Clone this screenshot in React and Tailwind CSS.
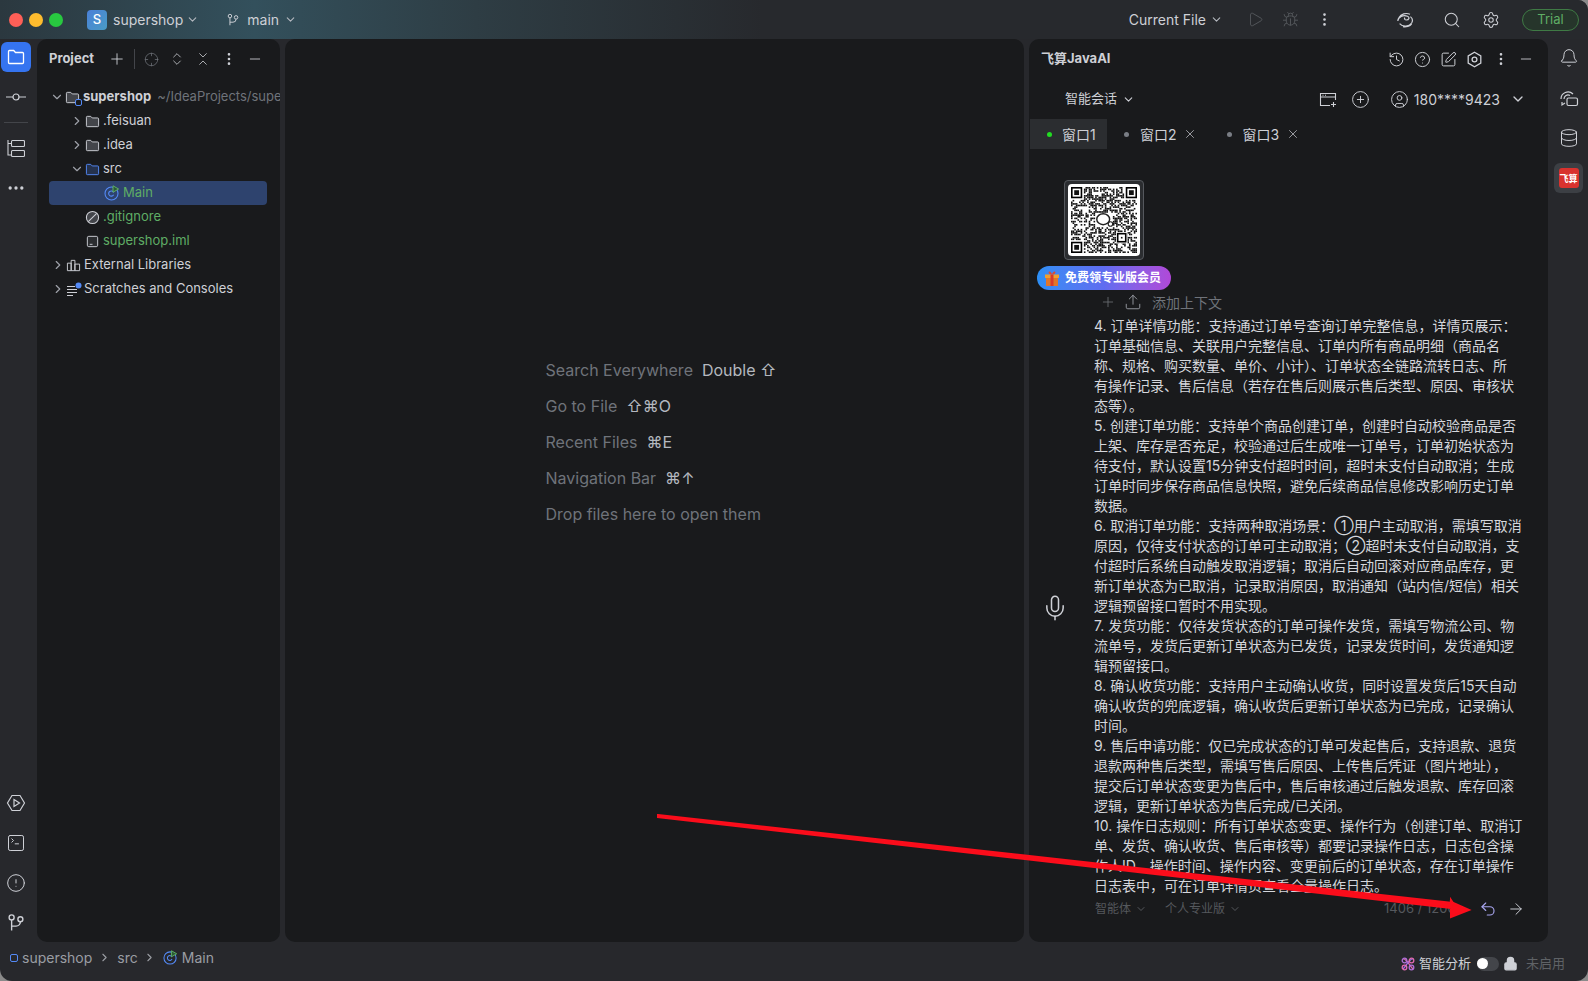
import React from 'react';
import {
  ArrowRight, Bell, Bug, ChevronDown, ChevronRight, ChevronsDownUp, ChevronsUpDown, CircleAlert,
  CircleHelp, CirclePlus, CircleUser, Crosshair, Database, Ellipsis, EllipsisVertical, History,
  Lock, Mic, Minus, Play, Plus, Search, Settings, SquarePen, SquareTerminal, Undo2, Upload, X,
} from 'lucide-react';

const Folder = ({ blue }) => (
  <svg width="15" height="15" viewBox="0 0 16 16" fill={blue ? '#25324d' : '#43454a'} stroke={blue ? '#548af7' : '#ced0d6'} strokeWidth="1">
    <path d="M1.5 3.5a1 1 0 0 1 1-1h3.6l1.6 1.7h5.8a1 1 0 0 1 1 1v7.3a1 1 0 0 1-1 1h-11a1 1 0 0 1-1-1z" />
  </svg>
);

const MainIcon = ({ size = 16 }) => (
  <svg width={size} height={size} viewBox="0 0 16 16" fill="none">
    <circle cx="7.5" cy="8.5" r="6.5" stroke="#548af7" strokeWidth="1.1" />
    <path d="M9.6 7.4a2.6 2.6 0 1 0 0 2.3" stroke="#548af7" strokeWidth="1.1" />
    <path d="M9 .8l5.6 3.2L9 7.2z" fill="#2c5a36" stroke="#5fad65" strokeWidth="1" />
  </svg>
);

const BranchIcon = ({ size = 16, color = '#ced0d6' }) => (
  <svg width={size} height={size} viewBox="0 0 16 16" fill="none" stroke={color} strokeWidth="1.1">
    <circle cx="4.5" cy="3.5" r="2" />
    <circle cx="11.5" cy="5" r="2" />
    <path d="M4.5 5.5V14M4.5 10.5h3.5a3.5 3.5 0 0 0 3.5-3.5" />
  </svg>
);

const QrCode = () => {
  const cells = [];
  const finder = (x, y) =>
    (x >= 0 && x < 8 && y >= 0 && y < 8) || (x >= 33 && y < 8) || (x < 8 && y >= 33);
  for (let y = 0; y < 41; y++) {
    for (let x = 0; x < 41; x++) {
      const center = Math.abs(x - 20) < 6 && Math.abs(y - 20) < 5;
      const bit = Math.sin(x * 12.9898 + y * 78.233) * 43758.5453;
      if (!finder(x, y) && !center && bit - Math.floor(bit) > 0.52) {
        cells.push(<rect key={x + '-' + y} x={x} y={y} width="1" height="1" />);
      }
    }
  }
  const eye = (x, y) => (
    <g key={x + '-' + y}>
      <rect x={x + 0.5} y={y + 0.5} width="6" height="6" fill="none" stroke="#000" />
      <rect x={x + 2} y={y + 2} width="3" height="3" />
    </g>
  );
  return (
    <svg width="66" height="66" viewBox="0 0 41 41" fill="#111">
      {cells}
      {eye(0, 0)}
      {eye(34, 0)}
      {eye(0, 34)}
      <rect x="28" y="28" width="7" height="7" fill="#fff" />
      <rect x="29" y="29" width="5" height="5" fill="none" stroke="#000" />
      <rect x="31" y="31" width="1" height="1" />
      <ellipse cx="20" cy="20" rx="4" ry="3.4" fill="none" stroke="#222" strokeWidth="0.9" />
      <circle cx="24.5" cy="23" r="1.4" fill="none" stroke="#222" strokeWidth="0.7" />
    </svg>
  );
};

const Row = ({ className, chevron, icon, children }) => (
  <div className={'flex h-6 items-center whitespace-nowrap ' + className}>
    <span className="flex w-[15px] justify-center text-[#9da0a8]">
      {chevron === 'open' && <ChevronDown size={14} />}
      {chevron === 'closed' && <ChevronRight size={14} />}
    </span>
    {icon}
    {children}
  </div>
);

const lines = [
  '4. 订单详情功能：支持通过订单号查询订单完整信息，详情页展示：',
  '订单基础信息、关联用户完整信息、订单内所有商品明细（商品名',
  '称、规格、购买数量、单价、小计）、订单状态全链路流转日志、所',
  '有操作记录、售后信息（若存在售后则展示售后类型、原因、审核状',
  '态等）。',
  '5. 创建订单功能：支持单个商品创建订单，创建时自动校验商品是否',
  '上架、库存是否充足，校验通过后生成唯一订单号，订单初始状态为',
  '待支付，默认设置15分钟支付超时时间，超时未支付自动取消；生成',
  '订单时同步保存商品信息快照，避免后续商品信息修改影响历史订单',
  '数据。',
  '6. 取消订单功能：支持两种取消场景：①用户主动取消，需填写取消',
  '原因，仅待支付状态的订单可主动取消；②超时未支付自动取消，支',
  '付超时后系统自动触发取消逻辑；取消后自动回滚对应商品库存，更',
  '新订单状态为已取消，记录取消原因，取消通知（站内信/短信）相关',
  '逻辑预留接口暂时不用实现。',
  '7. 发货功能：仅待发货状态的订单可操作发货，需填写物流公司、物',
  '流单号，发货后更新订单状态为已发货，记录发货时间，发货通知逻',
  '辑预留接口。',
  '8. 确认收货功能：支持用户主动确认收货，同时设置发货后15天自动',
  '确认收货的兜底逻辑，确认收货后更新订单状态为已完成，记录确认',
  '时间。',
  '9. 售后申请功能：仅已完成状态的订单可发起售后，支持退款、退货',
  '退款两种售后类型，需填写售后原因、上传售后凭证（图片地址），',
  '提交后订单状态变更为售后中，售后审核通过后触发退款、库存回滚',
  '逻辑，更新订单状态为售后完成/已关闭。',
  '10. 操作日志规则：所有订单状态变更、操作行为（创建订单、取消订',
  '单、发货、确认收货、售后审核等）都要记录操作日志，日志包含操',
  '作人ID、操作时间、操作内容、变更前后的订单状态，存在订单操作',
  '日志表中，可在订单详情页查看全量操作日志。',
];

const hints = [
  ['Search Everywhere', 'Double ⇧'],
  ['Go to File', '⇧⌘O'],
  ['Recent Files', '⌘E'],
  ['Navigation Bar', '⌘↑'],
  ['Drop files here to open them', ''],
];

export default function App() {
  return (
    <div className="relative h-[981px] w-[1588px] overflow-hidden bg-[#8a8a8a] font-['Inter','Noto_Sans_CJK_SC',sans-serif]">
      <div className="flex h-full flex-col overflow-hidden rounded-b-[12px] rounded-tr-[10px] bg-[#27282c] text-[#ced0d6]">
        {/* Title bar */}
        <div className="flex h-[39px] shrink-0 items-center bg-[linear-gradient(90deg,#2b383f_0%,#33505c_16%,#2e3d44_30%,#27292d_48%)] text-sm">
          <div className="ml-[9px] flex gap-[6px]">
            <span className="h-[14px] w-[14px] rounded-full bg-[#fe5f57]" />
            <span className="h-[14px] w-[14px] rounded-full bg-[#febc2e]" />
            <span className="h-[14px] w-[14px] rounded-full bg-[#28c840]" />
          </div>
          <div className="ml-[24px] flex h-5 w-5 items-center justify-center rounded bg-gradient-to-br from-[#4a80d8] to-[#4a9bc4] text-[13px] font-medium text-white">S</div>
          <span className="ml-[6px]">supershop</span>
          <ChevronDown size={13} className="ml-[3px] text-[#b4b8bf]" />
          <span className="ml-[27px]"><BranchIcon size={14} /></span>
          <span className="ml-[7px]">main</span>
          <ChevronDown size={13} className="ml-[5px] text-[#b4b8bf]" />
          <span className="ml-auto">Current File</span>
          <ChevronDown size={13} className="ml-[4px] text-[#b4b8bf]" />
          <Play size={17} strokeWidth={1.3} className="ml-[24px] text-[#55585d]" />
          <Bug size={17} strokeWidth={1.3} className="ml-[18px] text-[#55585d]" />
          <EllipsisVertical size={17} strokeWidth={1.8} className="ml-[17px] text-[#ced0d6]" />
          <svg width="18" height="18" viewBox="0 0 18 18" fill="none" stroke="#ced0d6" strokeWidth="1.2" className="ml-[63px]">
            <path d="M3 6.5C5 3 10 1.5 14 3.2M1.8 10C2 5.6 7.5 3.6 11.5 5.2 14 6.3 13 9 10.5 9 8.8 9 8 7.6 9 6.8M3.6 12.6c3.2 3.6 9.6 3 12-.6 1.4-2.4.6-5-1.2-6.4M7 15.6c3 .6 7-.4 8.6-2.8" />
          </svg>
          <Search size={18} strokeWidth={1.4} className="ml-[29px]" />
          <Settings size={18} strokeWidth={1.4} className="ml-[21px]" />
          <div className="ml-[22px] mr-[9px] flex h-[22px] w-[57px] items-center justify-center rounded-full border border-[#3f7a45] bg-[#26352b] text-[13px] text-[#5fad65]">Trial</div>
        </div>

        {/* Body */}
        <div className="flex h-[903px] shrink-0">
          {/* Left tool strip */}
          <div className="flex w-[37px] shrink-0 flex-col items-center pl-[-5px] pr-[5px]">
            <div className="mt-[3px] flex h-[30px] w-[30px] items-center justify-center rounded-[6px] bg-[#3574f0]">
              <svg width="20" height="20" viewBox="0 0 20 20" fill="none" stroke="#fff" strokeWidth="1.3">
                <path d="M2.5 4.5a1 1 0 0 1 1-1h4.2l1.8 2h7a1 1 0 0 1 1 1v9a1 1 0 0 1-1 1h-13a1 1 0 0 1-1-1z" />
              </svg>
            </div>
            <svg width="20" height="14" viewBox="0 0 20 14" fill="none" stroke="#ced0d6" strokeWidth="1.2" className="mt-[18px]">
              <circle cx="10" cy="7" r="3" />
              <path d="M0 7h7M13 7h7" />
            </svg>
            <div className="mt-[18px] h-px w-6 bg-[#43454a]" />
            <svg width="18" height="20" viewBox="0 0 18 20" fill="none" stroke="#ced0d6" strokeWidth="1.1" className="mt-[16px]">
              <rect x="4.5" y="1.5" width="13" height="6" rx="1" />
              <rect x="4.5" y="11.5" width="13" height="6" rx="1" />
              <path d="M1 1v15h3.5M1 4.5h3.5" />
            </svg>
            <Ellipsis size={20} className="mt-[19px] text-[#ced0d6]" />
            <div className="mt-auto flex flex-col items-center gap-[20px] pb-[9px]">
              <svg width="20" height="20" viewBox="0 0 20 20" fill="none" stroke="#ced0d6" strokeWidth="1.2">
                <path d="M6 2.5h8l4.5 7.5-4.5 7.5H6L1.500 10z" />
                <path d="M8 6.500l5.500 3.500L8 13.500z" />
              </svg>
              <SquareTerminal size={20} strokeWidth={1.2} />
              <CircleAlert size={20} strokeWidth={1.2} />
              <BranchIcon size={20} />
            </div>
          </div>

          {/* Project panel */}
          <div className="w-[243px] shrink-0 overflow-hidden rounded-[10px] bg-[#191a1c] text-[13px]">
            <div className="flex h-10 items-center">
              <span className="ml-3 font-bold text-[#ced0d6]">Project</span>
              <Plus size={18} strokeWidth={1.2} className="ml-[14px]" />
              <span className="ml-2 h-[20px] w-px bg-[#43454a]" />
              <Crosshair size={15} strokeWidth={1.2} className="ml-[9px] text-[#6f737a]" />
              <ChevronsUpDown size={16} strokeWidth={1.2} className="ml-[10px]" />
              <ChevronsDownUp size={16} strokeWidth={1.2} className="ml-[10px]" />
              <EllipsisVertical size={16} className="ml-[10px]" />
              <Minus size={16} strokeWidth={1.3} className="ml-[10px]" />
            </div>
            <div className="mt-[6px] pl-3">
              <Row className="pl-[1px]" chevron="open" icon={
                <span className="relative ml-[1px] mr-[3px] flex w-[16px]"><Folder /><span className="absolute -bottom-[1px] right-[-2px] h-[7px] w-[7px] rounded-[2px] border border-[#548af7] bg-[#191a1c]" /></span>
              }>
                <span className="font-bold">supershop</span>
                <span className="ml-[6px] text-[#6f737a]">~/IdeaProjects/supershop</span>
              </Row>
              <Row className="pl-[20px]" chevron="closed" icon={<span className="ml-[1px] mr-[3px]"><Folder /></span>}>.feisuan</Row>
              <Row className="pl-[20px]" chevron="closed" icon={<span className="ml-[1px] mr-[3px]"><Folder /></span>}>.idea</Row>
              <Row className="pl-[20px]" chevron="open" icon={<span className="ml-[1px] mr-[3px]"><Folder blue /></span>}>src</Row>
              <Row className="w-[218px] rounded-[4px] bg-[#2e436e] pl-[20px] text-[#5fad65]" icon={<span className="ml-[20px] mr-[3px]"><MainIcon /></span>}>Main</Row>
              <Row className="pl-[20px] text-[#5fad65]" icon={
                <svg width="15" height="15" viewBox="0 0 16 16" fill="#43454a" stroke="#ced0d6" strokeWidth="1.1" className="ml-[1px] mr-[3px]">
                  <circle cx="8" cy="8" r="6.500" /><path d="M12.500 3.500l-9 9" />
                </svg>
              }>.gitignore</Row>
              <Row className="pl-[20px] text-[#5fad65]" icon={
                <svg width="15" height="15" viewBox="0 0 16 16" fill="#2b2d30" stroke="#ced0d6" strokeWidth="1" className="ml-[1px] mr-[3px]">
                  <rect x="2.500" y="2.500" width="11" height="11" rx="1.500" /><path d="M5 11h3" />
                </svg>
              }>supershop.iml</Row>
              <Row className="pl-[1px]" chevron="closed" icon={
                <svg width="15" height="15" viewBox="0 0 16 16" fill="none" stroke="#ced0d6" strokeWidth="1" className="ml-[1px] mr-[3px]">
                  <path d="M1.500 5.500h4v8h-4zM5.500 2.500h4v11h-4zM9.500 6.500h5v7h-5z" />
                </svg>
              }>External Libraries</Row>
              <Row className="pl-[1px]" chevron="closed" icon={
                <svg width="16" height="15" viewBox="0 0 16 15" fill="none" stroke="#ced0d6" strokeWidth="1" className="ml-[1px] mr-[2px]">
                  <path d="M1 4.500h8M1 7.500h10M1 10.500h10M1 13.500h6" />
                  <circle cx="12.500" cy="3.500" r="3" fill="#548af7" stroke="none" />
                </svg>
              }>Scratches and Consoles</Row>
            </div>
          </div>

          {/* Editor */}
          <div className="ml-[5px] flex w-[739px] shrink-0 flex-col items-center rounded-[10px] bg-[#191a1c] pt-[319px] text-base text-[#6f737a]">
            <div className="flex w-[218px] flex-col gap-[12px]">
              {hints.map(([label, key]) => (
                <div key={label} className="flex h-6 items-center whitespace-nowrap">
                  <span>{label}</span>
                  {key && <span className="ml-[9px] text-[#b4b8bf]">{key}</span>}
                </div>
              ))}
            </div>
          </div>

          {/* Feisuan panel */}
          <div className="ml-[5px] flex w-[519px] shrink-0 flex-col overflow-hidden rounded-[10px] bg-[#191a1c] text-[14px]">
            <div className="flex h-10 shrink-0 items-center">
              <span className="ml-3 text-[13px] font-bold">飞算JavaAI</span>
              <History size={17} strokeWidth={1.4} className="ml-auto" />
              <CircleHelp size={17} strokeWidth={1.4} className="ml-[9px]" />
              <SquarePen size={17} strokeWidth={1.4} className="ml-[9px]" />
              <svg width="17" height="17" viewBox="0 0 17 17" fill="none" stroke="#ced0d6" strokeWidth="1.3" className="ml-[9px]">
                <path d="M8.500 1.200l6.300 3.650v7.300L8.500 15.800l-6.300-3.650v-7.300z" />
                <circle cx="8.500" cy="8.500" r="2.400" />
              </svg>
              <EllipsisVertical size={16} className="ml-[10px]" />
              <Minus size={16} strokeWidth={1.3} className="ml-[9px] mr-[14px]" />
            </div>
            <div className="flex h-10 shrink-0 items-center">
              <span className="ml-9 text-[13px]">智能会话</span>
              <ChevronDown size={13} className="ml-[5px]" />
              <svg width="18" height="17" viewBox="0 0 18 17" fill="none" stroke="#ced0d6" strokeWidth="1.1" className="ml-auto">
                <path d="M11 14.500H1.500v-12h15V9M1.500 6h15M3.500 4.300h1M6 4.300h1M14.500 11v5M12 13.500h5" />
              </svg>
              <CirclePlus size={19} strokeWidth={1.2} className="ml-[14px]" />
              <CircleUser size={19} strokeWidth={1.2} className="ml-[20px]" />
              <span className="ml-[5px]">180****9423</span>
              <ChevronDown size={16} className="ml-[10px] mr-[22px]" />
            </div>
            <div className="flex h-[30px] shrink-0 items-center">
              <div className="ml-px flex h-full w-[77px] items-center bg-[#2b2d30]">
                <span className="ml-[17px] h-[5px] w-[5px] rounded-full bg-[#22dd22]" />
                <span className="ml-[10px]">窗口1</span>
              </div>
              <span className="ml-[17px] h-[5px] w-[5px] rounded-full bg-[#7a7e85]" />
              <span className="ml-[11px]">窗口2</span>
              <X size={14} strokeWidth={1.2} className="ml-[6px]" />
              <span className="ml-[30px] h-[5px] w-[5px] rounded-full bg-[#7a7e85]" />
              <span className="ml-[11px]">窗口3</span>
              <X size={14} strokeWidth={1.2} className="ml-[7px]" />
            </div>
            <div className="ml-[35px] mt-[31px] flex h-20 w-20 shrink-0 items-center justify-center rounded-[4px] border border-[#55585d] bg-[#2b2d30]">
              <div className="flex h-[72px] w-[72px] items-center justify-center rounded-[4px] bg-white">
                <QrCode />
              </div>
            </div>
            <div className="ml-2 mt-[6px] flex h-6 w-[134px] shrink-0 items-center rounded-full bg-gradient-to-r from-[#2b8ff5] via-[#5f6cf0] to-[#b048d8] text-xs font-bold text-white">
              <svg width="16" height="17" viewBox="0 0 16 17" className="ml-[7px]">
                <rect x="2" y="7" width="12" height="9" fill="#e0762a" />
                <rect x="1" y="4.500" width="14" height="3.500" fill="#f0a030" />
                <rect x="6.500" y="4.500" width="3" height="11.500" fill="#d83a2a" />
                <path d="M8 4.500C5 4.500 4 3 4.800 1.800 6 .8 7.500 2.500 8 4.500c.5-2 2-3.700 3.200-2.700C12 3 11 4.500 8 4.500z" fill="#e04a30" />
              </svg>
              <span className="ml-[5px] whitespace-nowrap">免费领专业版会员</span>
            </div>
            <div className="flex h-6 shrink-0 items-center text-[#6f737a]">
              <Plus size={16} strokeWidth={1.2} className="ml-[71px]" />
              <Upload size={18} strokeWidth={1.2} className="ml-[8px] text-[#9da0a8]" />
              <span className="ml-[10px]">添加上下文</span>
            </div>
            <div className="mt-[5px] flex h-[577px] shrink-0 items-center overflow-hidden">
              <Mic size={28} strokeWidth={1.3} className="ml-[12px] shrink-0" />
              <div className="ml-[25px] h-full self-start whitespace-nowrap leading-5 text-[#d5d7dc]">
                <div className="-mt-[3px]">
                  {lines.map((line) => <div key={line}>{line}</div>)}
                </div>
              </div>
            </div>
            <div className="flex h-[26px] shrink-0 items-center text-xs text-[#55585d]">
              <span className="ml-[66px]">智能体</span>
              <ChevronDown size={12} className="ml-[4px]" />
              <span className="ml-[18px]">个人专业版</span>
              <ChevronDown size={12} className="ml-[4px]" />
              <span className="ml-[143px] whitespace-nowrap text-[13px]">1406 / 1200</span>
              <Undo2 size={18} strokeWidth={1.5} className="ml-auto text-[#a9a6f0]" />
              <ArrowRight size={18} strokeWidth={1.3} className="ml-[10px] mr-[23px] text-[#ced0d6]" />
            </div>
          </div>

          {/* Right tool strip */}
          <div className="flex w-[40px] shrink-0 flex-col items-center pl-[1px] text-[#ced0d6]">
            <Bell size={20} strokeWidth={1.2} className="mt-[9px]" />
            <svg width="20" height="20" viewBox="0 0 20 20" fill="none" stroke="#ced0d6" strokeWidth="1.2" className="mt-[21px]">
              <path d="M2 10a7 7 0 0 1 12-5M5 10a4 4 0 0 1 6-3.500" />
              <rect x="8" y="9" width="10.500" height="7.500" rx="1.500" />
              <path d="M3 13v3l3-2" />
            </svg>
            <Database size={20} strokeWidth={1.2} className="mt-[19px]" />
            <div className="mt-[15px] flex h-[30px] w-[29px] items-center justify-center rounded-[6px] bg-[#3c3f44]">
              <div className="flex h-5 w-5 items-center justify-center overflow-hidden whitespace-nowrap rounded-[3px] bg-[#d8322e] text-[9px] font-bold leading-none text-white">飞算</div>
            </div>
          </div>
        </div>

        {/* Status bar */}
        <div className="flex h-[39px] shrink-0 text-sm text-[#9a9da3]">
          <div className="flex h-[31px] items-center">
            <span className="ml-[10px] h-[8px] w-[8px] rounded-[2px] border border-[#548af7]" />
            <span className="ml-[4px]">supershop</span>
            <ChevronRight size={13} className="ml-[6px]" />
            <span className="ml-[6px]">src</span>
            <ChevronRight size={13} className="ml-[5px]" />
            <span className="ml-[7px]"><MainIcon size={15} /></span>
            <span className="ml-[4px]">Main</span>
          </div>
          <div className="ml-auto flex h-[43px] items-center pr-[23px] text-[13px]">
            <svg width="14" height="14" viewBox="0 0 14 14" fill="none" strokeWidth="1.3">
              <path d="M2 2c3-1 7 7 10 10" stroke="#e06ab0" />
              <path d="M12 2C9 1 5 9 2 12" stroke="#a070e8" />
              <circle cx="3.500" cy="3.500" r="2.300" stroke="#b070d8" />
              <circle cx="10.500" cy="10.500" r="2.300" stroke="#b070d8" />
              <circle cx="10.500" cy="3.500" r="2.300" stroke="#e06ab0" />
              <circle cx="3.500" cy="10.500" r="2.300" stroke="#e06ab0" />
            </svg>
            <span className="ml-[4px] text-[#ced0d6]">智能分析</span>
            <span className="ml-[6px] flex h-[14px] w-[22px] items-center rounded-full bg-[#43454a]">
              <span className="h-[11px] w-[11px] rounded-full bg-white" />
            </span>
            <Lock size={15} fill="#ced0d6" className="ml-[4px] text-[#ced0d6]" />
            <span className="ml-[8px] text-[#5f6266]">未启用</span>
          </div>
        </div>
      </div>

      {/* Red annotation arrow drawn on top of the screenshot */}
      <svg width="1588" height="981" viewBox="0 0 1588 981" className="pointer-events-none absolute left-0 top-0">
        <path d="M658 815 L1453 903 L1451 900 L1451 917 L1469 910 L1451 902 L1452 908 L658 817z" fill="#fb0d1b" stroke="#fb0d1b" strokeWidth="2" />
      </svg>
    </div>
  );
}
